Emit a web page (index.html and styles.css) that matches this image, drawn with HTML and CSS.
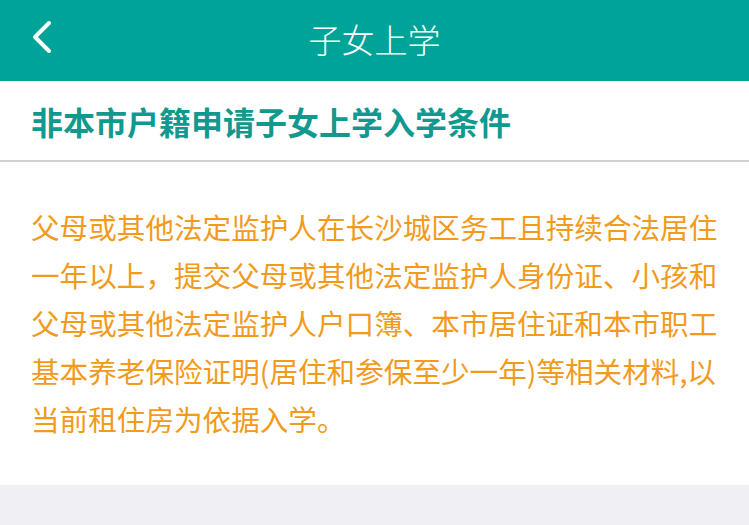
FILE: index.html
```html
<!DOCTYPE html>
<html lang="zh-CN">
<head>
<meta charset="utf-8">
<title>子女上学</title>
<link rel="stylesheet" href="styles.css">
</head>
<body>
<header class="nav">
  <span class="back"><svg width="22" height="34" viewBox="0 0 22 34"><path d="M18 3 L4 17 L18 31" fill="none" stroke="#fff" stroke-width="4" stroke-linecap="round" stroke-linejoin="round"/></svg></span>
  <h1 class="nav-title">子女上学</h1>
</header>
<section class="card">
  <h2 class="subtitle">非本市户籍申请子女上学入学条件</h2>
  <p class="content">父母或其他法定监护人在长沙城区务工且持续合法居住一年以上，提交父母或其他法定监护人身份证、小孩和父母或其他法定监护人户口簿、本市居住证和本市职工基本养老保险证明(居住和参保至少一年)等相关材料,以当前租住房为依据入学。</p>
</section>
<div class="footer-space"></div>
</body>
</html>
```
FILE: styles.css
```css
html, body {
  margin: 0;
  padding: 0;
  background: #efeff4;
  font-family: "Noto Sans CJK SC", "Noto Sans", sans-serif;
}
.nav {
  height: 81px;
  background: #00a398;
  display: flex;
  align-items: center;
  justify-content: center;
  position: relative;
}
.back {
  position: absolute;
  left: 31px;
  top: 20px;
  display: flex;
}
.nav-title {
  margin: 0;
  color: #fff;
  font-size: 33px;
  font-weight: 300;
  line-height: 1;
  margin-top: -3px;
}
.card {
  background: #fff;
}
.subtitle {
  margin: 0;
  height: 79px;
  display: flex;
  align-items: center;
  padding: 0 31px;
  color: #12998f;
  font-size: 32px;
  font-weight: 700;
  border-bottom: 2px solid #d0d0d0;
}
.content {
  margin: 0;
  padding: 41px 31px 42px;
  color: #f29a1c;
  font-size: 28.6px;
  line-height: 48px;
}
.footer-space {
  height: 41px;
}
```
